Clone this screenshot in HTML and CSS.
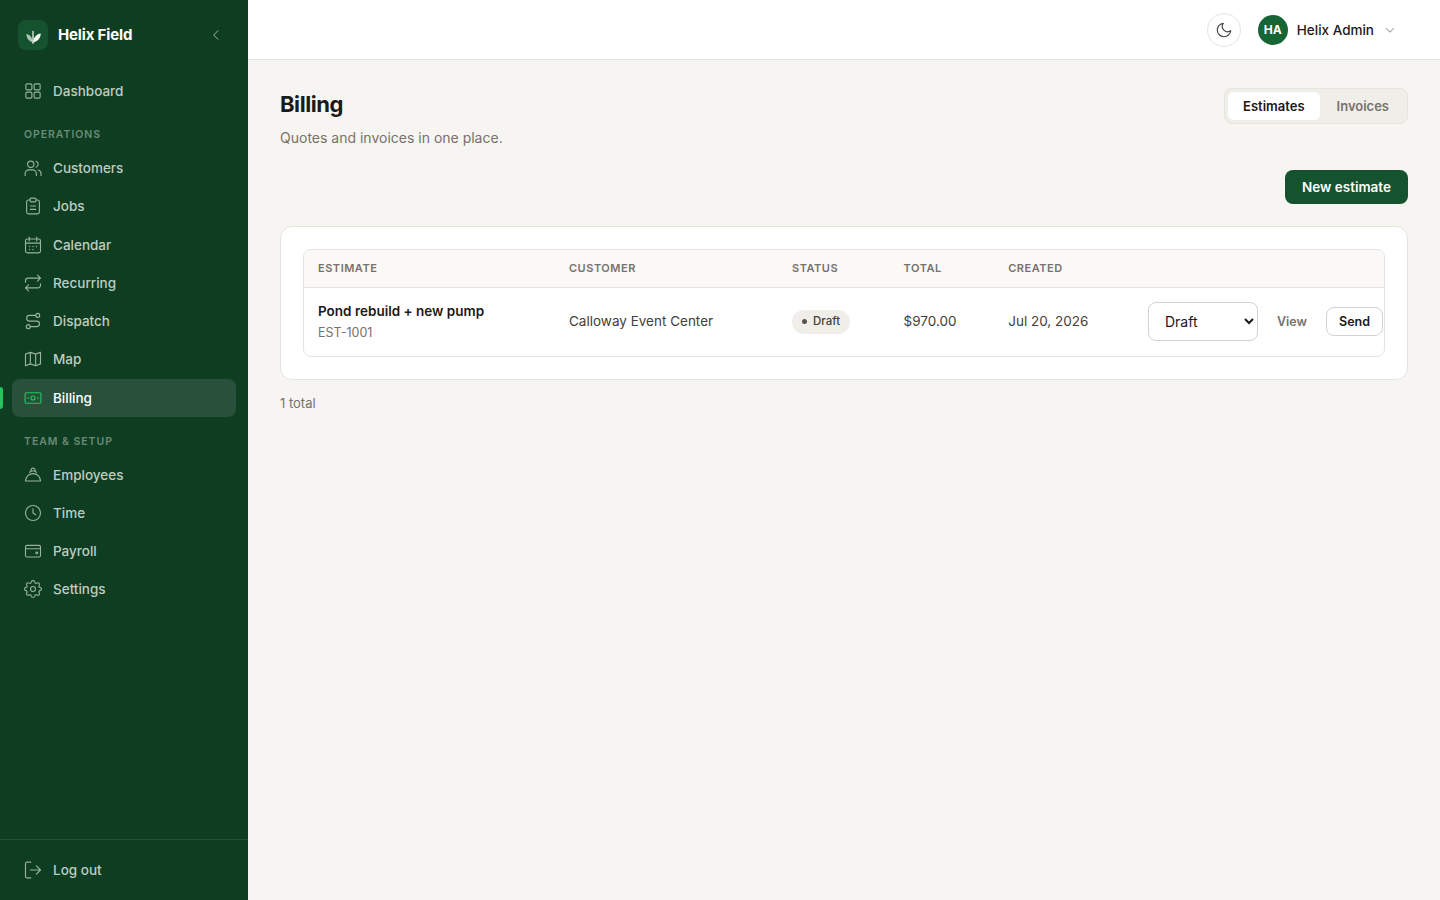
FILE: index.html
```html
<!DOCTYPE html>
<html lang="en">
<head>
    <meta charset="UTF-8">
    <meta name="viewport" content="width=device-width, initial-scale=1.0">
    <title>Billing - Helix Field</title>
    <link rel="stylesheet" href="styles.css">
</head>
<body>
    <aside class="sidebar">
        <div class="brand">
            <span class="brand-logo">
                <svg width="18" height="18" viewBox="0 0 18 18">
                    <path d="M2.4 8C5.6 8.5 8.2 11 9 16.4C5 15.4 2.6 12.6 2.4 8Z" fill="#fff" opacity=".65"/>
                    <path d="M16.8 7.6C12.6 8.2 9.8 11 9 16.4C13.6 15.6 16.6 12.6 16.8 7.6Z" fill="#fff" opacity=".95"/>
                    <path d="M9 5.4V17.2" stroke="#e4f3e9" stroke-width="1.3" stroke-linecap="round"/>
                </svg>
            </span>
            <span class="brand-name">Helix Field</span>
            <button class="collapse" aria-label="Collapse">
                <svg class="icon" width="16" height="16" viewBox="0 0 24 24"><path d="M15 5.5L8.5 12l6.5 6.5"/></svg>
            </button>
        </div>

        <nav class="nav">
            <a class="nav-item" href="#">
                <svg class="icon" viewBox="0 0 24 24"><rect x="2.5" y="2.5" width="8" height="8" rx="1.5"/><rect x="13.5" y="2.5" width="8" height="8" rx="1.5"/><rect x="2.5" y="13.5" width="8" height="8" rx="1.5"/><rect x="13.5" y="13.5" width="8" height="8" rx="1.5"/></svg>
                Dashboard
            </a>
            <div class="nav-title">Operations</div>
            <a class="nav-item" href="#">
                <svg class="icon" viewBox="0 0 24 24"><circle cx="9" cy="7" r="4.2"/><path d="M1.5 22v-2.5a5 5 0 0 1 5-5h5a5 5 0 0 1 5 5V22M16 3a4.2 4.2 0 0 1 0 8M19 14.7a5 5 0 0 1 3.7 4.8V22"/></svg>
                Customers
            </a>
            <a class="nav-item" href="#">
                <svg class="icon" viewBox="0 0 24 24"><path d="M8 4H6a2.5 2.5 0 0 0-2.5 2.5V20A2.5 2.5 0 0 0 6 22.5h12a2.5 2.5 0 0 0 2.5-2.5V6.5A2.5 2.5 0 0 0 18 4h-2M8.5 12h7M8.5 16.5h7"/><rect x="8" y="1.5" width="8" height="5" rx="1.5"/></svg>
                Jobs
            </a>
            <a class="nav-item" href="#">
                <svg class="icon" viewBox="0 0 24 24"><rect x="2" y="4" width="20" height="18.5" rx="2.5"/><path d="M2 9.5h20M7 1.5v5M17 1.5v5"/><path class="dots" d="M7.5 14h.01M12 14h.01M16.5 14h.01M7.5 18h.01M12 18h.01"/></svg>
                Calendar
            </a>
            <a class="nav-item" href="#">
                <svg class="icon" viewBox="0 0 24 24"><path d="M18 1.5l4 4-4 4M2 11V9a3.5 3.5 0 0 1 3.5-3.5H22M6 22.5l-4-4 4-4M22 13v2a3.5 3.5 0 0 1-3.5 3.5H2"/></svg>
                Recurring
            </a>
            <a class="nav-item" href="#">
                <svg class="icon" viewBox="0 0 24 24"><circle cx="18.3" cy="4.5" r="2.6"/><circle cx="5.7" cy="19.5" r="2.6"/><path d="M15.7 4.5H7.4a3.8 3.8 0 0 0 0 7.6H17a3.7 3.7 0 0 1 0 7.4H8.3"/></svg>
                Dispatch
            </a>
            <a class="nav-item" href="#">
                <svg class="icon" viewBox="0 0 24 24"><path d="M2 5.5L8.5 3l7 2.5L22 3v15.5L15.5 21l-7-2.5L2 21zM8.5 3v15.5M15.5 5.5V21"/></svg>
                Map
            </a>
            <a class="nav-item active" href="#">
                <svg class="icon" viewBox="0 0 24 24"><rect x="1.5" y="5" width="21" height="14" rx="1.5"/><circle cx="12" cy="12" r="2.7"/><path d="M5.5 11.5v1M18.5 11.5v1"/></svg>
                Billing
            </a>
            <div class="nav-title">Team &amp; Setup</div>
            <a class="nav-item" href="#">
                <svg class="icon" viewBox="0 0 24 24"><path d="M2 20h20c-.4-5.8-4.6-9.8-10-9.8S2.4 14.2 2 20zM7.5 8.5L9 7c.2-2.8 1-4.3 3-4.3S14.8 4.2 15 7l1.5 1.5M9.8 7c1.4-.8 3-.8 4.4 0"/></svg>
                Employees
            </a>
            <a class="nav-item" href="#">
                <svg class="icon" viewBox="0 0 24 24"><circle cx="12" cy="12" r="10"/><path d="M12 6.5V12l3.7 2.2"/></svg>
                Time
            </a>
            <a class="nav-item" href="#">
                <svg class="icon" viewBox="0 0 24 24"><rect x="2" y="4.5" width="20" height="15.5" rx="2"/><path d="M2 9h20"/><circle cx="17" cy="14.5" r="1.2"/></svg>
                Payroll
            </a>
            <a class="nav-item" href="#">
                <svg class="icon gear" viewBox="0 0 24 24"><path d="M12 .8c1.5 0 2.3.9 2.5 2.2.2 1.3 1.5 1.9 2.6 1.2 1.1-.8 2.2-.7 3 .1s.8 2 .1 3c-.8 1.1-.2 2.4 1.1 2.6 1.3.2 2 .9 2 2.1s-.7 2-2 2.2c-1.3.2-1.9 1.5-1.1 2.6.7 1 .7 2.1-.1 2.9s-2 .9-3 .1c-1.1-.7-2.4-.1-2.6 1.2-.2 1.3-1 2.2-2.5 2.2s-2.3-.9-2.5-2.2c-.2-1.3-1.5-1.9-2.6-1.2-1 .8-2.2.7-3-.1s-.8-1.9-.1-2.9c.8-1.1.2-2.4-1.1-2.6-1.3-.2-2-1-2-2.2s.7-1.9 2-2.1c1.3-.2 1.9-1.5 1.1-2.6-.7-1-.7-2.2.1-3s1.9-.9 3-.1c1.1.7 2.4.1 2.6-1.2C9.7 1.7 10.5.8 12 .8z"/><circle cx="12" cy="12" r="3.3"/></svg>
                Settings
            </a>
        </nav>

        <div class="sidebar-footer">
            <a class="nav-item" href="#">
                <svg class="icon" viewBox="0 0 24 24"><path d="M9 1.5H4a2 2 0 0 0-2 2v17a2 2 0 0 0 2 2h5M8.5 12H22M16.5 6.5L22 12l-5.5 5.5"/></svg>
                Log out
            </a>
        </div>
    </aside>

    <div class="page">
        <header class="topbar">
            <button class="theme-toggle" aria-label="Theme">
                <svg class="icon" width="18" height="18" viewBox="0 0 24 24"><path d="M21 12.8A9 9 0 1 1 11.2 3 7 7 0 0 0 21 12.8z"/></svg>
            </button>
            <div class="user">
                <span class="avatar">HA</span>
                <span class="user-name">Helix Admin</span>
                <svg class="icon chevron" width="14" height="14" viewBox="0 0 24 24"><path d="M5.5 9l6.5 6.5L18.5 9"/></svg>
            </div>
        </header>

        <main class="content">
            <div class="page-head">
                <div>
                    <h1>Billing</h1>
                    <p class="subtitle">Quotes and invoices in one place.</p>
                </div>
                <div class="tabs">
                    <button class="tab selected">Estimates</button>
                    <button class="tab">Invoices</button>
                </div>
            </div>

            <div class="actions">
                <button class="btn-primary">New estimate</button>
            </div>

            <div class="card">
                <div class="table-wrap">
                    <table>
                        <thead>
                            <tr>
                                <th class="col-estimate">Estimate</th>
                                <th class="col-customer">Customer</th>
                                <th class="col-status">Status</th>
                                <th class="col-total">Total</th>
                                <th class="col-created">Created</th>
                                <th></th>
                            </tr>
                        </thead>
                        <tbody>
                            <tr>
                                <td>
                                    <div class="name">Pond rebuild + new pump</div>
                                    <div class="number">EST-1001</div>
                                </td>
                                <td class="text-cell">Calloway Event Center</td>
                                <td><span class="badge">Draft</span></td>
                                <td class="text-cell">$970.00</td>
                                <td class="text-cell">Jul 20, 2026</td>
                                <td>
                                    <div class="row-actions">
                                        <select>
                                            <option>Draft</option>
                                            <option>Sent</option>
                                            <option>Approved</option>
                                        </select>
                                        <button class="btn-ghost">View</button>
                                        <button class="btn-small">Send</button>
                                    </div>
                                </td>
                            </tr>
                        </tbody>
                    </table>
                </div>
            </div>
            <p class="count">1 total</p>
        </main>
    </div>
</body>
</html>
```
FILE: styles.css
```css
* {
    box-sizing: border-box;
}

body {
    margin: 0;
    display: flex;
    height: 100vh;
    font-family: Inter, "Liberation Sans", sans-serif;
    font-size: 14px;
    color: #1c1917;
    background-color: #f6f5f1;
}

button,
select {
    font-family: inherit;
    margin: 0;
}

.icon {
    fill: none;
    stroke: currentColor;
    stroke-width: 1.5;
    stroke-linecap: round;
    stroke-linejoin: round;
    flex-shrink: 0;
}

/* sidebar */
.sidebar {
    width: 248px;
    flex-shrink: 0;
    display: flex;
    flex-direction: column;
    background-color: #0f3d22;
}

.brand {
    display: flex;
    align-items: center;
    height: 70px;
    padding: 0 22px 0 18px;
}

.brand-logo {
    display: flex;
    align-items: center;
    justify-content: center;
    width: 30px;
    height: 30px;
    border-radius: 8px;
    background-color: #14532d;
}

.brand-name {
    margin-left: 10px;
    padding-bottom: 1px;
    font-size: 15px;
    font-weight: 700;
    letter-spacing: -0.15px;
    color: #fff;
}

.collapse {
    display: flex;
    margin-left: auto;
    padding: 2px;
    border: none;
    background: none;
    color: #9fb5a7;
}

.nav {
    flex: 1;
    padding: 2px 12px;
}

.nav-item {
    position: relative;
    display: flex;
    align-items: center;
    gap: 11px;
    height: 38.25px;
    padding: 0 12px;
    border-radius: 8px;
    font-size: 13.5px;
    font-weight: 500;
    color: #bccdc2;
    text-decoration: none;
}

.nav-item .icon {
    width: 18px;
    height: 18px;
    color: #97b3a1;
}

.nav-item .gear {
    overflow: visible;
}

.dots {
    stroke-width: 1.8;
}

.nav-item.active {
    background-color: #29503a;
    color: #fff;
}

.nav-item.active .icon {
    color: #22c55e;
}

.nav-item.active::before {
    content: "";
    position: absolute;
    left: -12px;
    top: 8px;
    width: 3px;
    height: 22px;
    border-radius: 0 3px 3px 0;
    background-color: #22c55e;
}

.nav-title {
    height: 38.8px;
    padding: 18px 12px 0;
    font-size: 10.5px;
    line-height: 14px;
    font-weight: 600;
    letter-spacing: 0.95px;
    text-transform: uppercase;
    color: #6a8b76;
}

.sidebar-footer {
    padding: 11px 12px;
    border-top: 1px solid #264f37;
}

/* top bar */
.page {
    flex: 1;
    min-width: 0;
}

.topbar {
    display: flex;
    align-items: center;
    justify-content: flex-end;
    height: 60px;
    padding: 0 43px 0 0;
    background-color: #fff;
    border-bottom: 1px solid #e5e4df;
}

.theme-toggle {
    display: flex;
    align-items: center;
    justify-content: center;
    width: 34px;
    height: 34px;
    padding: 0;
    border: 1px solid #e5e4df;
    border-radius: 50%;
    background-color: #fff;
    color: #44403c;
}

.user {
    display: flex;
    align-items: center;
    margin-left: 17px;
}

.avatar {
    width: 30px;
    height: 30px;
    border-radius: 50%;
    background-color: #166534;
    color: #fff;
    font-size: 12px;
    font-weight: 700;
    line-height: 30px;
    text-align: center;
}

.user-name {
    margin: 0 9px;
    font-size: 13.5px;
    font-weight: 500;
}

.chevron {
    color: #a8a29e;
    stroke-width: 1.8;
}

/* content */
.content {
    padding: 28px 32px;
}

.page-head {
    display: flex;
    justify-content: space-between;
    align-items: flex-start;
    height: 82px;
}

h1 {
    margin: 0;
    font-size: 22px;
    line-height: 33px;
    font-weight: 700;
    letter-spacing: -0.44px;
}

.subtitle {
    margin: 6px 0 0;
    line-height: 22px;
    color: #78716c;
}

.tabs {
    display: flex;
    gap: 2px;
    padding: 3px;
    border: 1px solid #e5e4df;
    border-radius: 8px;
    background-color: #efeee9;
}

.tab {
    height: 28px;
    padding: 0 15px;
    border: none;
    border-radius: 6px;
    background: none;
    font-size: 13px;
    font-weight: 600;
    color: #78716c;
}

.tab.selected {
    background-color: #fff;
    color: #1c1917;
}

.actions {
    display: flex;
    justify-content: flex-end;
    margin-bottom: 22px;
}

.btn-primary {
    width: 123px;
    height: 34px;
    padding: 0;
    border: none;
    border-radius: 8px;
    background-color: #14532d;
    color: #fff;
    font-size: 13.5px;
    font-weight: 600;
}

.card {
    padding: 22px;
    border: 1px solid #e5e4df;
    border-radius: 12px;
    background-color: #fff;
}

.table-wrap {
    border: 1px solid #e5e4df;
    border-radius: 8px;
    overflow: hidden;
}

table {
    width: 100%;
    table-layout: fixed;
    border-collapse: separate;
    border-spacing: 0;
}

th {
    height: 38px;
    padding: 0 14px 1px;
    border-bottom: 1px solid #e5e4df;
    background-color: #faf9f6;
    font-size: 11px;
    font-weight: 600;
    letter-spacing: 0.52px;
    text-align: left;
    text-transform: uppercase;
    color: #78716c;
}

td {
    height: 68px;
    padding: 0 14px 1px;
    font-size: 13.5px;
    color: #44403c;
}

.text-cell {
    padding-bottom: 2px;
}

.col-estimate {
    width: 251px;
}

.col-customer {
    width: 223px;
}

.col-status {
    width: 111.6px;
}

.col-total {
    width: 104.6px;
}

.col-created {
    width: 139.8px;
}

.name {
    padding-top: 1px;
    line-height: 21px;
    font-weight: 600;
    color: #1c1917;
}

.number {
    line-height: 21px;
    font-size: 12.5px;
    color: #78716c;
}

.badge {
    display: inline-flex;
    align-items: center;
    gap: 6px;
    height: 24px;
    padding: 0 10px 1px;
    border-radius: 12px;
    background-color: #efeee9;
    font-size: 11.5px;
    font-weight: 500;
    vertical-align: middle;
}

.badge::before {
    content: "";
    width: 5px;
    height: 5px;
    border-radius: 50%;
    background-color: #57534e;
}

.row-actions {
    display: flex;
    align-items: center;
}

select {
    width: 110px;
    height: 39px;
    flex-shrink: 0;
    padding: 0 0 0 12px;
    border: 1px solid #d6d3ce;
    border-radius: 8px;
    background-color: #fff;
    color: #1c1917;
    font-size: 14px;
}

.btn-ghost,
.btn-small {
    height: 29px;
    flex-shrink: 0;
    padding: 0 12px;
    border: 1px solid transparent;
    border-radius: 8px;
    background: none;
    font-size: 12.5px;
    font-weight: 600;
    color: #78716c;
}

.btn-ghost {
    margin: 0 6px;
}

.btn-small {
    border-color: #d6d3ce;
    color: #1c1917;
}

.count {
    margin: 13px 0 0;
    font-size: 13px;
    line-height: 20px;
    color: #78716c;
}
```
